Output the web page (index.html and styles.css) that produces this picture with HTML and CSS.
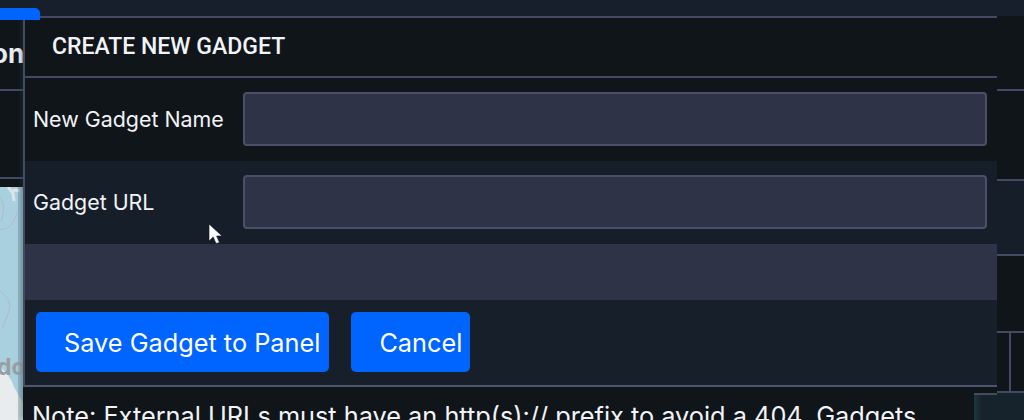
FILE: index.html
```html
<!DOCTYPE html>
<html lang="en">
<head>
<meta charset="utf-8">
<title>Create New Gadget</title>
<link rel="stylesheet" href="styles.css">
</head>
<body>
<div class="backdrop">
  <div class="side-left">
    <div class="top-gap"></div>
    <div class="tab"></div>
    <div class="left-head"><span class="head-word">on</span></div>
    <div class="left-bar"></div>
    <div class="map">
      <svg class="map-art" viewBox="0 0 23 233" preserveAspectRatio="none" aria-hidden="true">
        <path d="M0 0H23V233H0Z" fill="#a9d0de"/>
        <path d="M8 0L13 6L14 14M13 3L20 4" fill="none" stroke="#dfe3e6" stroke-width="3"/>
        <path d="M0 10C5 16 4 26 1 34M18 24C14 36 8 44 0 42M0 104C5 108 12 114 9 124L2 142" fill="none" stroke="#b4b9c8" stroke-width="1"/>
        <path d="M0 180C5 184 12 192 14 200L23 216V233H0Z" fill="#e9ecec"/>
        <path d="M18 0H23V233H18Z" fill="#5d7d88" opacity=".35"/>
      </svg>
      <span class="map-label">dor</span>
    </div>
  </div>
  <div class="side-mid"><div class="mid-gap"></div><div class="mid-corner"></div></div>
  <div class="side-right">
    <div class="r-top"></div>
    <div class="r-a"></div>
    <div class="r-navy"></div>
    <div class="r-b"></div>
    <div class="r-cells"><div class="r-cell"></div><div class="r-cell r-cell-end"></div></div>
    <div class="r-teal"></div>
  </div>
</div>

<main class="dialog">
  <section class="panel">
    <h1 class="panel-title">CREATE NEW GADGET</h1>
    <div class="field field-dark">
      <label class="field-label" for="gname">New Gadget Name</label>
      <input class="field-input" id="gname" type="text">
    </div>
    <div class="field field-navy">
      <label class="field-label" for="gurl">Gadget URL</label>
      <input class="field-input" id="gurl" type="text">
    </div>
    <div class="panel-strip"></div>
    <div class="actions">
      <button class="btn btn-save" type="button">Save Gadget to Panel</button>
      <button class="btn btn-cancel" type="button">Cancel</button>
    </div>
  </section>
  <p class="note">Note: External URLs must have an http(s):// prefix to avoid a 404. Gadgets</p>
</main>

<svg class="cursor" width="15" height="22" viewBox="0 0 15 22" aria-hidden="true">
  <path d="M1 1V18L5.2 14L8 20.5L11.5 19.5L8.6 13L14 13Z" fill="#fff" stroke="#10151a" stroke-width=".6"/>
</svg>
</body>
</html>
```
FILE: styles.css
```css
* { box-sizing: border-box; }
html, body { margin: 0; height: 420px; overflow: hidden; }
body { position: relative; width: 1024px; background: #10151a; font-family: Inter, "Noto Sans", sans-serif; color: #f1f3f6; }

.backdrop { display: flex; height: 420px; }
.side-left { width: 23px; display: flex; flex-direction: column; background: #10151a; }
.top-gap { height: 8px; background: #171e2c; }
.tab { position: relative; z-index: 1; height: 12px; width: 40px; flex: none; background: #0064fe; border-radius: 0 5px 0 0; }
.left-head { height: 69px; overflow: hidden; display: flex; align-items: center; padding-bottom: 2px; }
.head-word { font-size: 26px; font-weight: 700; margin-left: -8px; color: #e8ebef; }
.left-bar { height: 90px; border-top: 2px solid #444a63; border-bottom: 2px solid #444a63; background: #10151a; }
.map { position: relative; flex: 1; margin-top: 8px; overflow: hidden; background: #a9d0de; }
.map-art { display: block; width: 23px; height: 233px; }
.map-label { position: absolute; left: -3px; top: 166px; font-size: 23px; font-weight: 700; color: #9a9ea3; }

.side-mid { flex: 1; display: flex; flex-direction: column; justify-content: flex-end; align-items: flex-end; background: #171e2c; }
.mid-gap { width: 24px; height: 6px; background: #10151a; }
.mid-corner { width: 24px; height: 27px; border-top: 2px solid #444a63; background: linear-gradient(90deg, #1d3b40, #16222c 9px); }

.side-right { width: 27px; display: flex; flex-direction: column; }
.r-top { height: 16px; background: #171e2c; }
.r-a { height: 165px; border-bottom: 2px solid #444a63; background: linear-gradient(#10151a 73px, #444a63 73px, #444a63 75px, #10151a 75px); }
.r-navy { height: 73px; background: #161e2a; }
.r-b { height: 77px; border-top: 2px solid #444a63; background: #10151a; }
.r-cells { height: 62px; display: flex; border-top: 2px solid #444a63; border-bottom: 2px solid #444a63; background: #10151a; }
.r-cell { width: 14px; border-right: 2px solid #444a63; }
.r-cell-end { flex: 1; border-right: 0; }
.r-teal { flex: 1; background: #16222c; }

.dialog { position: absolute; left: 23px; top: 16px; width: 974px; box-shadow: -4px 0 4px -2px rgba(35, 75, 85, .3); }
.panel { background: #10151a; border: 2px solid #444a63; border-right: 0; border-bottom: 2px solid #4f5570; display: flex; flex-direction: column; height: 371px; }
.panel-title { margin: 0; height: 60px; flex: none; padding: 0 27px 2px; display: flex; align-items: center; font-family: Roboto, Inter, sans-serif; font-size: 23px; font-weight: 500; border-bottom: 2px solid #444a63; color: #f1f3f6; }
.field { display: flex; align-items: center; padding: 0 10px 0 8px; flex: none; height: 83px; }
.field-dark { background: #10151a; padding-bottom: 1px; }
.field-navy { background: #161e2a; padding-bottom: 2px; }
.field-label { width: 210px; flex: none; font-size: 21.4px; font-weight: 400; color: #f1f3f6; }
.field-input { flex: 1; height: 54px; background: #2e3348; border: 2px solid #4b5069; border-radius: 4px; }
.panel-strip { height: 56px; flex: none; background: #2e3348; }
.actions { flex: 1; display: flex; gap: 22px; padding: 12px 11px; background: #17202a; }
.btn { height: 60px; border: 0; border-radius: 5px; background: #0064fe; color: #fff; font-family: Inter, sans-serif; font-size: 25.3px; padding: 0 8px 0 28px; text-align: left; white-space: nowrap; }
.btn-save { padding-right: 9px; }
.note { margin: 0; width: 951px; height: 33px; padding: 14px 9px 0; background: #10151a; font-size: 25.3px; line-height: 30px; white-space: nowrap; overflow: hidden; color: #f1f3f6; }
.cursor { position: absolute; left: 208px; top: 223px; }
```
